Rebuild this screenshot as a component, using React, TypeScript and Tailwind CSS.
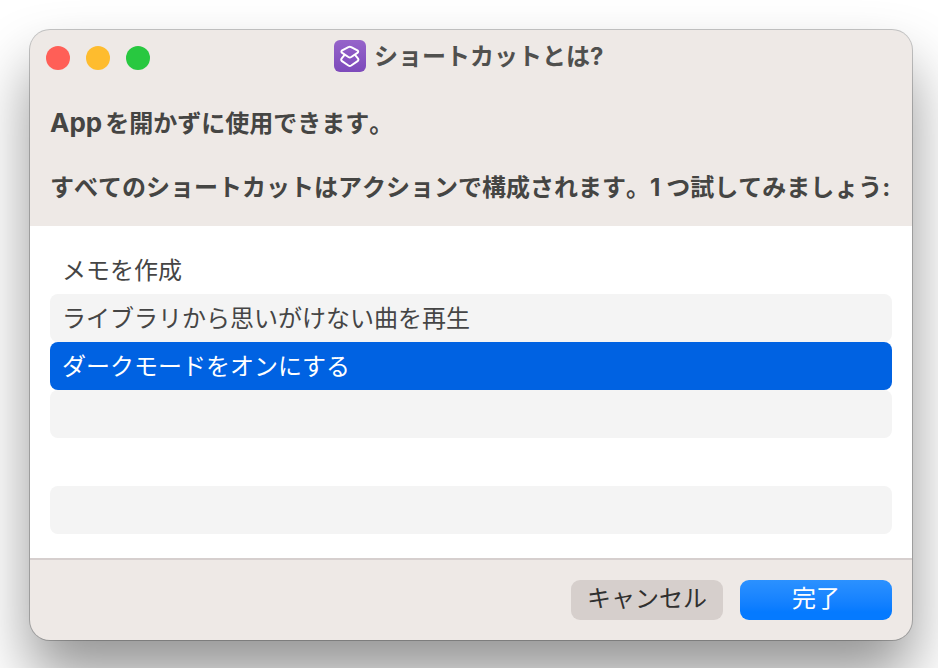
import React from 'react';

const ROWS = [
  'メモを作成',
  'ライブラリから思いがけない曲を再生',
  'ダークモードをオンにする',
  '',
  '',
  '',
];
const SELECTED = 2;

const rowStyle = (i: number) => {
  if (i === SELECTED) return 'bg-[#0062e2] text-white';
  return i % 2 === 1 ? 'bg-[#f4f4f4] text-[#454545]' : 'text-[#454545]';
};

const ShortcutsIcon: React.FC = () => (
  <svg className="size-8 shrink-0" viewBox="0 0 32 32" fill="none">
    <defs>
      <linearGradient id="tile" x1="0" y1="0" x2="0" y2="1">
        <stop offset="0" stopColor="#9664ca" />
        <stop offset="1" stopColor="#7d4abb" />
      </linearGradient>
    </defs>
    <rect width="32" height="32" rx="6" fill="url(#tile)" />
    <g stroke="#fff" strokeWidth="2" strokeLinejoin="round" strokeLinecap="round">
      <path d="M14.4 7.1 L8.2 10.4 Q6.6 11.6 8.2 12.9 L14.4 17 Q15.8 17.8 17.2 17 L23.4 12.9 Q25 11.6 23.4 10.4 L17.2 7.1 Q15.8 6.5 14.4 7.1 Z" />
      <path d="M10.4 15.2 L8.1 17.8 Q6.3 19.8 8 21.2 L14.4 25.5 Q15.8 26.3 17.2 25.5 L23.6 21.2 Q25.3 19.8 23.5 17.8 L21.2 15.2" />
    </g>
  </svg>
);

const App: React.FC = () => {
  return (
    <div className="h-screen overflow-hidden bg-white p-[30px] font-['Inter','Noto_Sans_CJK_JP',sans-serif] text-2xl [font-kerning:none]" lang="ja">
      <div className="flex h-[610px] w-[882px] flex-col overflow-hidden rounded-[20px] bg-[#eee9e6] shadow-[0_0_0_1px_rgba(0,0,0,0.22),0_36px_60px_rgba(0,0,0,0.42)]">
        {/* Title bar and intro */}
        <header className="h-[196px] shrink-0 font-bold text-[#454543]">
          <div className="flex h-[56px] items-center px-4">
            <div className="flex gap-4">
              <span className="size-6 rounded-full bg-[#ff5f57]" />
              <span className="size-6 rounded-full bg-[#febc2e]" />
              <span className="size-6 rounded-full bg-[#28c840]" />
            </div>
            <div className="ml-[184px] flex items-center gap-2 pb-1 text-[#50504e]">
              <ShortcutsIcon />
              <h1 className="whitespace-nowrap pt-0.5 leading-8">ショートカットとは?</h1>
            </div>
          </div>
          <div className="flex flex-col gap-8 whitespace-nowrap px-5 pt-[22px]">
            <p className="h-8 leading-[30px]"><span className="mr-[3px] text-[26px]">App</span>を開かずに使用できます。</p>
            <p className="h-8 leading-8">
              すべてのショートカットはアクションで構成されます。<span className="mr-1.5">1</span>つ試してみましょう:
            </p>
          </div>
        </header>

        {/* Action list */}
        <ul className="h-[332px] shrink-0 bg-white px-5 pt-5">
          {ROWS.map((row, i) => (
            <li key={i} className={`flex h-12 items-center rounded-lg px-3 pt-0.5 ${rowStyle(i)}`}>
              {row}
            </li>
          ))}
        </ul>

        <footer className="flex flex-1 items-center justify-end gap-[17px] border-t-2 border-[#d6cfce] px-5">
          <button className="h-10 w-[152px] rounded-[9px] bg-[#d6cfcc] pb-0.5 leading-9 text-[#30302f]">キャンセル</button>
          <button className="h-10 w-[152px] rounded-[9px] bg-linear-to-b from-[#2b91ff] to-[#057aff] to-80% pb-0.5 leading-9 text-white">完了</button>
        </footer>
      </div>
    </div>
  );
};

export default App;
